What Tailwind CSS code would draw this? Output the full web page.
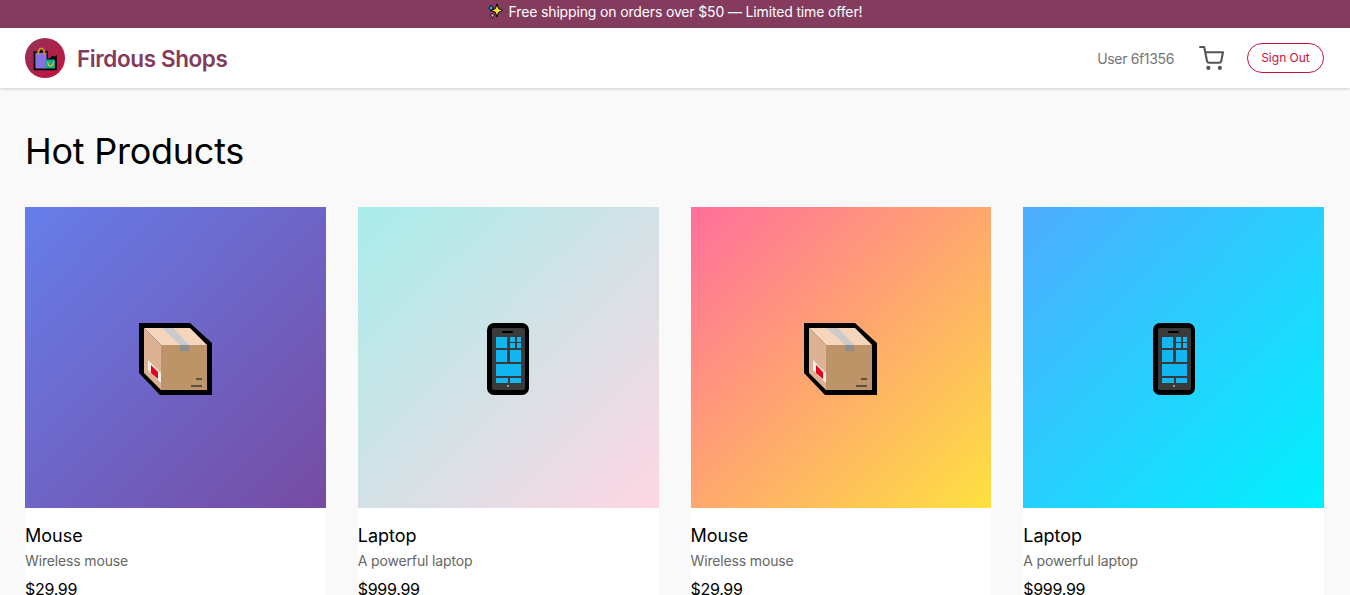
<!DOCTYPE html>
<html lang="en">
<head>
  <meta charset="UTF-8" />
  <meta name="viewport" content="width=device-width, initial-scale=1" />
  <title>Firdous Shops</title>
  <script src="https://cdn.jsdelivr.net/npm/@tailwindcss/browser@4"></script>
</head>
<body class="h-[595px] overflow-hidden bg-[#f9f9f9] font-['Inter',sans-serif] text-black">

  <!-- Banner -->
  <div class="flex h-7 items-center justify-center gap-[5px] bg-[#843b5e] pb-[6px] text-[14px] tracking-[-0.15px] text-white">
    <svg width="16" height="16" viewBox="0 0 16 16">
      <path d="M9 1 L10.6 5.6 L15 7.5 L10.6 9.2 L9 14 L7.4 9.2 L3 7.5 L7.4 5.6 Z" fill="#fde52b" stroke="#000" stroke-width="1"/>
      <path d="M3 2 L4 4 L6 5 L4 6 L3 8 L2 6 L0.5 5 L2 4 Z" fill="#17b5ec" stroke="#000" stroke-width=".7"/>
      <path d="M4.5 10 L5.3 11.6 L7 12.5 L5.3 13.4 L4.5 15.5 L3.7 13.4 L2 12.5 L3.7 11.6 Z" fill="#f0a5d0" stroke="#000" stroke-width=".7"/>
    </svg>
    <span>Free shipping on orders over $50 — Limited time offer!</span>
  </div>

  <!-- Header -->
  <header class="flex h-[60px] items-center justify-between bg-white pl-[25px] pr-[26px] shadow-[0_1px_3px_rgba(0,0,0,0.18)]">
    <div class="flex items-center gap-3">
      <div class="flex h-10 w-10 items-center justify-center rounded-full bg-[linear-gradient(135deg,#8f3459,#c8103e)]">
        <svg class="mt-[2px] shrink-0" width="27" height="27" viewBox="0 0 24 24">
          <path d="M1.5 4.5 L6 5.5 L8 3.5 L11 5.5 L14 4 L14 11 L16 11 L18 8.5 L20 9.5 L22 8 L22 21.5 L1.5 21.5 Z" fill="#000"/>
          <path d="M3 6 L13 6 L13 20 L3 20 Z" fill="#8a6fe0"/>
          <path d="M12 12 L20.5 12 L20.5 20 L12 20 Z" fill="#10a98f"/>
          <path d="M5.5 8 C5.5 0 11 0 11 8" fill="none" stroke="#c99a1b" stroke-width="1.4"/>
          <path d="M14 14 C14 19 19 19 19 14" fill="none" stroke="#e0bd2c" stroke-width="1.2"/>
        </svg>
      </div>
      <span class="mt-[2px] text-[22.5px] font-semibold leading-8 tracking-[-0.4px] text-[#843b5e]">Firdous Shops</span>
    </div>
    <div class="flex items-center">
      <span class="text-[14px] tracking-[-0.35px] text-[#757575]">User 6f1356</span>
      <svg class="ml-[25px]" width="25" height="25" viewBox="0 0 24 24" fill="none" stroke="#555" stroke-width="2" stroke-linecap="round" stroke-linejoin="round">
        <circle cx="9" cy="21" r="1"/>
        <circle cx="20" cy="21" r="1"/>
        <path d="M1 1h4l2.68 13.39a2 2 0 0 0 2 1.61h9.72a2 2 0 0 0 2-1.61L23 6H6"/>
      </svg>
      <button class="ml-[23px] flex h-[30px] w-[77px] items-center justify-center rounded-full border border-[#c8103e] text-[12px] text-[#c8103e]">Sign Out</button>
    </div>
  </header>

  <!-- Products -->
  <main class="pl-[25px] pr-[26px] pt-[40px]">
    <h1 class="mb-[33px] text-[36px] font-normal leading-[46px] tracking-[-0.25px]">Hot Products</h1>
    <div class="grid grid-cols-4 gap-8">

      <div class="bg-white">
        <div class="flex aspect-square items-center justify-center bg-[linear-gradient(135deg,#667eea,#764ba2)] pt-[4px]">
          <svg width="73" height="73" viewBox="0 0 73 73">
            <path d="M0 0 L51 0 L73 20 L73 72 L21 72 L0 50 Z" fill="#000"/>
            <path d="M5 5 L22 22 L22 67 L5 50 Z" fill="#dcb295"/>
            <path d="M5 5 L51 5 L68 22 L22 22 Z" fill="#f6d5bd"/>
            <path d="M22 22 L68 22 L68 67 L22 67 Z" fill="#bd9468"/>
            <path d="M23 5 L34 5 L50 22 L41 22 Z" fill="#c9cac9"/>
            <path d="M41 22 L50 22 L50 28 L41 28 Z" fill="#8e8e8e"/>
            <path d="M9 37 L22 50 L22 60 L9 47 Z" fill="#f4eee7"/>
            <path d="M12 42 L19 49 L19 56 L12 50 Z" fill="#e6001f"/>
            <path d="M57 55 L63 55 L63 57 L57 57 Z M52 62 L63 62 L63 64 L52 64 Z" fill="#5c5044"/>
          </svg>
        </div>
        <div class="pt-[16px]">
          <h2 class="text-[18px] font-normal leading-[24px]">Mouse</h2>
          <p class="mt-[3px] text-[14px] leading-[20px] tracking-[-0.15px] text-[#666]">Wireless mouse</p>
          <p class="mt-[6px] text-[16px] font-normal leading-[24px] tracking-[-0.3px]">$29.99</p>
        </div>
      </div>

      <div class="bg-white">
        <div class="flex aspect-square items-center justify-center bg-[linear-gradient(135deg,#a8edea,#fed6e3)] pt-[4px]">
          <svg width="42" height="72" viewBox="0 0 42 72">
            <rect width="42" height="72" rx="7" fill="#000"/>
            <rect x="5" y="5" width="33" height="62" rx="2" fill="#3a3a3a"/>
            <rect x="15" y="8" width="11" height="2" rx="1" fill="#000"/>
            <g fill="#12b6f0">
              <rect x="9" y="14" width="11" height="11"/>
              <rect x="23" y="14" width="5" height="5"/>
              <rect x="30" y="14" width="4" height="5"/>
              <rect x="23" y="20" width="5" height="5"/>
              <rect x="30" y="20" width="4" height="5"/>
              <rect x="9" y="27" width="11" height="12"/>
              <rect x="23" y="27" width="11" height="12"/>
              <rect x="9" y="41" width="25" height="12"/>
              <rect x="9" y="55" width="12" height="5"/>
              <rect x="23" y="55" width="11" height="5"/>
            </g>
            <rect x="20" y="62" width="2" height="2" fill="#999"/>
          </svg>
        </div>
        <div class="pt-[16px]">
          <h2 class="text-[18px] font-normal leading-[24px]">Laptop</h2>
          <p class="mt-[3px] text-[14px] leading-[20px] tracking-[-0.15px] text-[#666]">A powerful laptop</p>
          <p class="mt-[6px] text-[16px] font-normal leading-[24px] tracking-[-0.3px]">$999.99</p>
        </div>
      </div>

      <div class="bg-white">
        <div class="flex aspect-square items-center justify-center bg-[linear-gradient(135deg,#ff6e9c,#fee140)] pt-[4px]">
          <svg width="73" height="73" viewBox="0 0 73 73">
            <path d="M0 0 L51 0 L73 20 L73 72 L21 72 L0 50 Z" fill="#000"/>
            <path d="M5 5 L22 22 L22 67 L5 50 Z" fill="#dcb295"/>
            <path d="M5 5 L51 5 L68 22 L22 22 Z" fill="#f6d5bd"/>
            <path d="M22 22 L68 22 L68 67 L22 67 Z" fill="#bd9468"/>
            <path d="M23 5 L34 5 L50 22 L41 22 Z" fill="#c9cac9"/>
            <path d="M41 22 L50 22 L50 28 L41 28 Z" fill="#8e8e8e"/>
            <path d="M9 37 L22 50 L22 60 L9 47 Z" fill="#f4eee7"/>
            <path d="M12 42 L19 49 L19 56 L12 50 Z" fill="#e6001f"/>
            <path d="M57 55 L63 55 L63 57 L57 57 Z M52 62 L63 62 L63 64 L52 64 Z" fill="#5c5044"/>
          </svg>
        </div>
        <div class="pt-[16px]">
          <h2 class="text-[18px] font-normal leading-[24px]">Mouse</h2>
          <p class="mt-[3px] text-[14px] leading-[20px] tracking-[-0.15px] text-[#666]">Wireless mouse</p>
          <p class="mt-[6px] text-[16px] font-normal leading-[24px] tracking-[-0.3px]">$29.99</p>
        </div>
      </div>

      <div class="bg-white">
        <div class="flex aspect-square items-center justify-center bg-[linear-gradient(135deg,#4facfe,#00f2fe)] pt-[4px]">
          <svg width="42" height="72" viewBox="0 0 42 72">
            <rect width="42" height="72" rx="7" fill="#000"/>
            <rect x="5" y="5" width="33" height="62" rx="2" fill="#3a3a3a"/>
            <rect x="15" y="8" width="11" height="2" rx="1" fill="#000"/>
            <g fill="#12b6f0">
              <rect x="9" y="14" width="11" height="11"/>
              <rect x="23" y="14" width="5" height="5"/>
              <rect x="30" y="14" width="4" height="5"/>
              <rect x="23" y="20" width="5" height="5"/>
              <rect x="30" y="20" width="4" height="5"/>
              <rect x="9" y="27" width="11" height="12"/>
              <rect x="23" y="27" width="11" height="12"/>
              <rect x="9" y="41" width="25" height="12"/>
              <rect x="9" y="55" width="12" height="5"/>
              <rect x="23" y="55" width="11" height="5"/>
            </g>
            <rect x="20" y="62" width="2" height="2" fill="#999"/>
          </svg>
        </div>
        <div class="pt-[16px]">
          <h2 class="text-[18px] font-normal leading-[24px]">Laptop</h2>
          <p class="mt-[3px] text-[14px] leading-[20px] tracking-[-0.15px] text-[#666]">A powerful laptop</p>
          <p class="mt-[6px] text-[16px] font-normal leading-[24px] tracking-[-0.3px]">$999.99</p>
        </div>
      </div>

    </div>
  </main>

</body>
</html>
